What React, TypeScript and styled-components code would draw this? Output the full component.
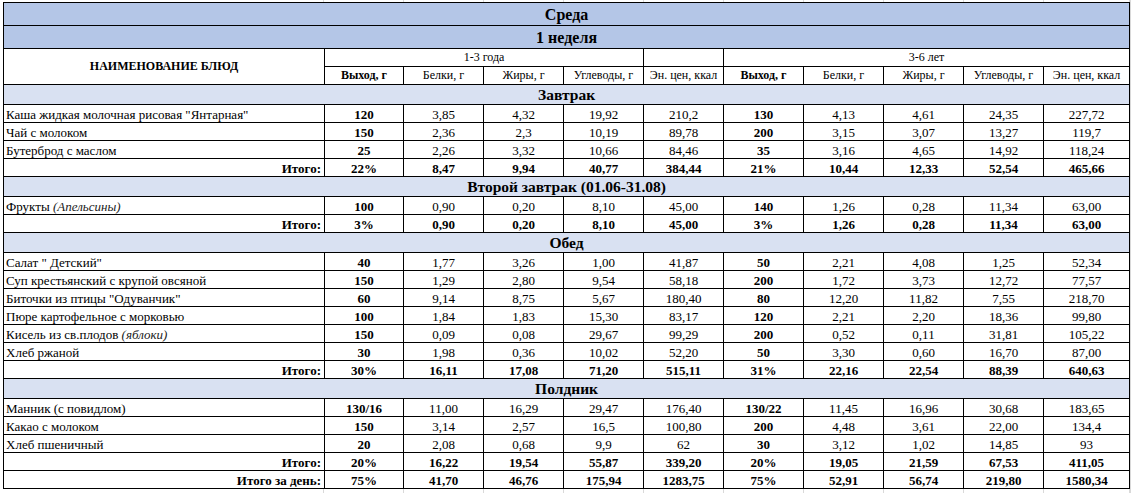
import React from "react";
import styled, { createGlobalStyle } from "styled-components";

const Global = createGlobalStyle`
  html, body { margin: 0; padding: 0; background: #ffffff; }
  body { font-family: "Liberation Serif", "Times New Roman", serif; color: #000; }
`;

const Sheet = styled.div`
  width: 1131px;
  border-right: 1px solid #d9d9d9;
  box-sizing: border-box;
  min-height: 493px;
`;

const GridStrip = styled.div<{ $h: number }>`
  display: flex;
  height: ${(p) => p.$h}px;
`;

const GridCell = styled.div<{ $w: number }>`
  width: ${(p) => p.$w}px;
  flex: none;
  box-sizing: border-box;
  border-right: 1px solid #d9d9d9;
`;

const TableWrap = styled.div`
  padding-left: 3px;
`;

const Table = styled.table`
  border-collapse: collapse;
  table-layout: fixed;
  width: 1127px;
  font-family: "Liberation Serif", "Times New Roman", serif;
  font-size: 13px;
  color: #000;
`;

const Row = styled.tr<{ $h: number }>`
  height: ${(p) => p.$h}px;
`;

const Cell = styled.td`
  border: 1px solid #000;
  padding: 0 2px;
  overflow: hidden;
  white-space: nowrap;
  vertical-align: bottom;
  line-height: 15px;
`;

const TitleCell = styled(Cell)`
  background: #b4c6e7;
  text-align: center;
  font-weight: bold;
  font-size: 16px;
  line-height: 19px;
  padding-bottom: 1px;
`;

const SectionCell = styled(Cell)`
  background: #d9e1f2;
  text-align: center;
  font-weight: bold;
  font-size: 15.5px;
  line-height: 18px;
`;

const HeadCell = styled(Cell)<{ $bold?: boolean }>`
  text-align: center;
  font-size: 12px;
  font-weight: ${(p) => (p.$bold ? "bold" : "normal")};
  vertical-align: middle;
`;

const NameCell = styled(Cell)`
  text-align: left;
`;

const TotalLabel = styled(Cell)`
  text-align: right;
  font-weight: bold;
  padding-right: 3px;
`;

const ValueCell = styled(Cell)<{ $bold?: boolean }>`
  text-align: center;
  font-weight: ${(p) => (p.$bold ? "bold" : "normal")};
`;

const Note = styled.i`
  color: #222;
`;

type Dish = { name: React.ReactNode; v: string[] };
type Section = { title: string; dishes: Dish[]; total: string[] };

const sections: Section[] = [
  {
    title: "Завтрак",
    dishes: [
      { name: 'Каша жидкая молочная рисовая "Янтарная"', v: ["120", "3,85", "4,32", "19,92", "210,2", "130", "4,13", "4,61", "24,35", "227,72"] },
      { name: "Чай с молоком", v: ["150", "2,36", "2,3", "10,19", "89,78", "200", "3,15", "3,07", "13,27", "119,7"] },
      { name: "Бутерброд с маслом", v: ["25", "2,26", "3,32", "10,66", "84,46", "35", "3,16", "4,65", "14,92", "118,24"] },
    ],
    total: ["22%", "8,47", "9,94", "40,77", "384,44", "21%", "10,44", "12,33", "52,54", "465,66"],
  },
  {
    title: "Второй завтрак (01.06-31.08)",
    dishes: [
      { name: <>Фрукты <Note>(Апельсины)</Note></>, v: ["100", "0,90", "0,20", "8,10", "45,00", "140", "1,26", "0,28", "11,34", "63,00"] },
    ],
    total: ["3%", "0,90", "0,20", "8,10", "45,00", "3%", "1,26", "0,28", "11,34", "63,00"],
  },
  {
    title: "Обед",
    dishes: [
      { name: 'Салат " Детский"', v: ["40", "1,77", "3,26", "1,00", "41,87", "50", "2,21", "4,08", "1,25", "52,34"] },
      { name: "Суп крестьянский с крупой овсяной", v: ["150", "1,29", "2,80", "9,54", "58,18", "200", "1,72", "3,73", "12,72", "77,57"] },
      { name: 'Биточки из птицы "Одуванчик"', v: ["60", "9,14", "8,75", "5,67", "180,40", "80", "12,20", "11,82", "7,55", "218,70"] },
      { name: "Пюре картофельное с морковью", v: ["100", "1,84", "1,83", "15,30", "83,17", "120", "2,21", "2,20", "18,36", "99,80"] },
      { name: <>Кисель из св.плодов <Note>(яблоки)</Note></>, v: ["150", "0,09", "0,08", "29,67", "99,29", "200", "0,52", "0,11", "31,81", "105,22"] },
      { name: "Хлеб ржаной", v: ["30", "1,98", "0,36", "10,02", "52,20", "50", "3,30", "0,60", "16,70", "87,00"] },
    ],
    total: ["30%", "16,11", "17,08", "71,20", "515,11", "31%", "22,16", "22,54", "88,39", "640,63"],
  },
  {
    title: "Полдник",
    dishes: [
      { name: "Манник (с повидлом)", v: ["130/16", "11,00", "16,29", "29,47", "176,40", "130/22", "11,45", "16,96", "30,68", "183,65"] },
      { name: "Какао с молоком", v: ["150", "3,14", "2,57", "16,5", "100,80", "200", "4,48", "3,61", "22,00", "134,4"] },
      { name: "Хлеб пшеничный", v: ["20", "2,08", "0,68", "9,9", "62", "30", "3,12", "1,02", "14,85", "93"] },
    ],
    total: ["20%", "16,22", "19,54", "55,87", "339,20", "20%", "19,05", "21,59", "67,53", "411,05"],
  },
];

const dayTotal = ["75%", "41,70", "46,76", "175,94", "1283,75", "75%", "52,91", "56,74", "219,80", "1580,34"];

const colWidths = [321, 79, 80, 80, 80, 80, 80, 80, 80, 80, 86];
const gridWidths = [324, 80, 80, 80, 80, 80, 80, 80, 80, 80, 86];
const metrics = ["Выход, г", "Белки, г", "Жиры, г", "Углеводы, г", "Эн. цен, ккал"];

const Values: React.FC<{ v: string[]; bold?: boolean }> = ({ v, bold }) => (
  <>
    {v.map((x, i) => (
      <ValueCell key={i} $bold={bold || i === 0 || i === 5}>
        {x}
      </ValueCell>
    ))}
  </>
);

export default function App() {
  return (
    <>
      <Global />
      <Sheet>
        <GridStrip $h={2}>
          {gridWidths.map((w, i) => (
            <GridCell key={i} $w={w} />
          ))}
        </GridStrip>
        <TableWrap>
          <Table>
            <colgroup>
              {colWidths.map((w, i) => (
                <col key={i} style={{ width: w }} />
              ))}
            </colgroup>
            <tbody>
              <Row $h={23}>
                <TitleCell colSpan={11}>Среда</TitleCell>
              </Row>
              <Row $h={23}>
                <TitleCell colSpan={11}>1 неделя</TitleCell>
              </Row>
              <Row $h={18}>
                <HeadCell rowSpan={2} $bold>
                  НАИМЕНОВАНИЕ БЛЮД
                </HeadCell>
                <HeadCell colSpan={4}>1-3 года</HeadCell>
                <HeadCell />
                <HeadCell colSpan={5}>3-6 лет</HeadCell>
              </Row>
              <Row $h={18}>
                {[...metrics, ...metrics].map((m, i) => (
                  <HeadCell key={i} $bold={i === 0 || i === 5}>
                    {m}
                  </HeadCell>
                ))}
              </Row>
              {sections.map((s) => (
                <React.Fragment key={s.title}>
                  <Row $h={20}>
                    <SectionCell colSpan={11}>{s.title}</SectionCell>
                  </Row>
                  {s.dishes.map((d, i) => (
                    <Row $h={18} key={i}>
                      <NameCell>{d.name}</NameCell>
                      <Values v={d.v} />
                    </Row>
                  ))}
                  <Row $h={18}>
                    <TotalLabel>Итого:</TotalLabel>
                    <Values v={s.total} bold />
                  </Row>
                </React.Fragment>
              ))}
              <Row $h={18}>
                <TotalLabel>Итого за день:</TotalLabel>
                <Values v={dayTotal} bold />
              </Row>
            </tbody>
          </Table>
        </TableWrap>
        <GridStrip $h={6}>
          {gridWidths.map((w, i) => (
            <GridCell key={i} $w={w} />
          ))}
        </GridStrip>
      </Sheet>
    </>
  );
}
